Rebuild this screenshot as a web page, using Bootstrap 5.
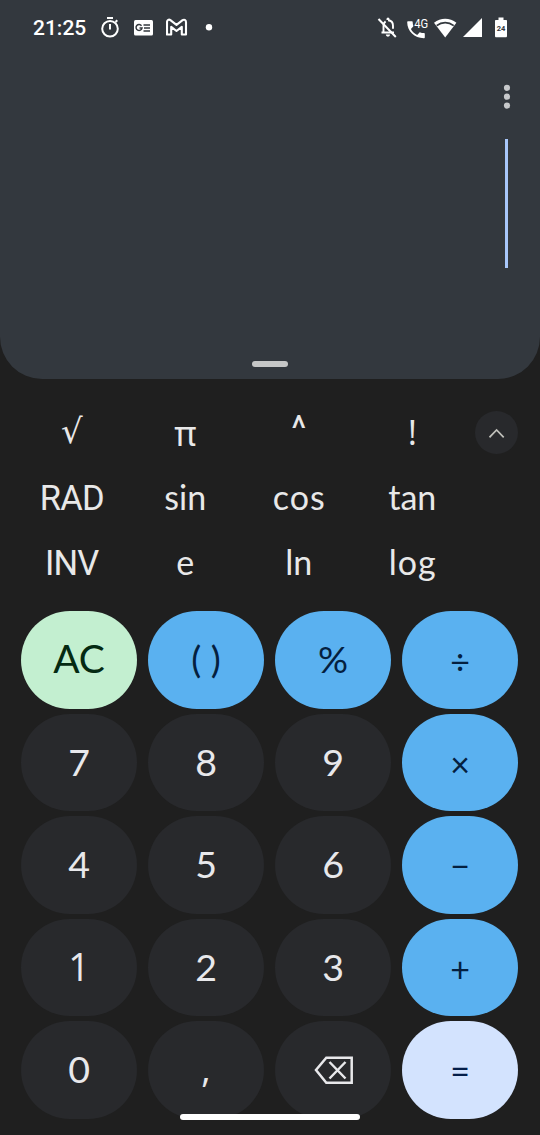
<!DOCTYPE html>
<html lang="en">
<head>
<meta charset="utf-8">
<meta name="viewport" content="width=device-width, initial-scale=1">
<title>Calculator</title>
<link rel="stylesheet" href="https://cdn.jsdelivr.net/npm/bootstrap@5.3.0/dist/css/bootstrap.min.css">
<style>
  body { background: #1f1f1f; color: #e8e8e8; font-family: Lato, "Liberation Sans", sans-serif; }
  .phone { width: 540px; height: 1135px; overflow: hidden; }
  svg { display: block; flex: none; }
  .display-panel { height: 379px; background: #33383e; border-radius: 0 0 42px 42px; }
  .status { height: 56px; padding: 0 31px 0 33px; color: #fff; }
  .clock { width: 67px; font: 500 21px/56px Roboto, sans-serif; }
  .ic-card { margin-left: 14px; }
  .ic-mail { margin-left: 12px; }
  .ic-dot { margin-left: 17px; }
  .ic-call { margin-left: 8px; }
  .ic-wifi { margin-left: 5px; }
  .ic-signal { margin-left: 6px; }
  .ic-battery { margin-left: 12px; }
  .menu-btn { width: 12px; height: 28px; margin: 27px 27px 0 0; }
  .cursor { width: 3px; height: 129px; margin: 28px 32px 0 0; background: #a8c7fa; }
  .handle { width: 36px; height: 6px; margin-bottom: 12px; background: #c6c7c7; }
  .functions { display: grid; grid-template-columns: repeat(4, 113.5px); grid-template-rows: repeat(3, 65px); padding: 20px 0 1px 15px; }
  .fn { font-size: 34px; line-height: 65px; padding: 0; border: 0; color: inherit; font-family: inherit; }
  .fn-caps { font-family: Roboto, sans-serif; font-size: 34.5px; letter-spacing: -.8px; padding-top: 2px; }
  .fn-wide { letter-spacing: 1px; padding-left: 1px; }
  .fn-sans { font-family: "Noto Sans", sans-serif; padding-top: 2px; }
  .fn-root { font-family: "DejaVu Sans", sans-serif; font-size: 34px; }
  .fn-caret { font-family: Roboto, sans-serif; font-size: 36px; line-height: 60px; padding-bottom: 5px; }
  .fn-bang { font-family: "Open Sans", sans-serif; font-size: 35px; }
  .toggle { width: 43px; height: 43px; margin: 32px 0 0 6px; background: #28292c; }
  .keypad { display: grid; grid-template-columns: repeat(4, 116px); grid-auto-rows: 97.5px; gap: 5px 11px; padding: 16px 0 0 21px; }
  .key { --bs-btn-padding-x: 0; --bs-btn-padding-y: 0; --bs-btn-color: #e8e8eb; --bs-btn-bg: #28292c; --bs-btn-border-width: 0;
    --bs-btn-font-family: Lato, sans-serif; --bs-btn-font-size: 37.5px; --bs-btn-line-height: 95px; padding-bottom: 2px; }
  .key-op { --bs-btn-bg: #5ab1f0; --bs-btn-color: #04203f; }
  .key-clear { --bs-btn-bg: #c3efd0; --bs-btn-color: #042a12; --bs-btn-font-size: 39px; padding-bottom: 3px; --bs-btn-line-height: 94px; }
  .key-equals { --bs-btn-bg: #d3e3fe; --bs-btn-color: #041e49; }
  .key-sign { --bs-btn-font-size: 34px; --bs-btn-line-height: 94px; padding: 3px 0 0; }
  .key-one { --bs-btn-font-family: "Open Sans", sans-serif; }
  .key-comma { --bs-btn-font-family: "Open Sans", sans-serif; --bs-btn-font-size: 36px; }
  .home-bar { left: 180px; bottom: 15px; width: 180px; height: 6px; background: #fff; }
</style>
</head>
<body>
<main class="phone position-relative">
  <section class="display-panel d-flex flex-column">
    <header class="status d-flex align-items-center justify-content-between">
      <div class="d-flex align-items-center">
        <span class="clock">21:25</span>
        <svg width="20" height="28" viewBox="100 14 20 28" fill="none" stroke="#fff" stroke-width="2"><circle cx="110" cy="28.7" r="7.8"/><path d="M107 18h6M110 24v5.5M115.5 22l1.8-1.8"/></svg>
        <svg class="ic-card" width="20" height="28" viewBox="134 14 20 28"><rect x="134" y="20" width="19" height="15.5" rx="1.500" fill="#fff"/><path d="M141.500 25.700a3 3 0 1 0 .5 2.400h-2.500M143.500 25.100h6.500M144 28h6M143.500 30.900h6.500" fill="none" stroke="#33383e" stroke-width="1.500"/></svg>
        <svg class="ic-mail" width="22" height="28" viewBox="166 14 22 28" fill="none" stroke="#fff" stroke-width="2.100" stroke-linejoin="round"><path d="M167 34.500V22.200c0-2.400 2-3.100 3.400-2l6.100 4.700 6.100-4.700c1.500-1.100 3.400-.3 3.400 2v12.300h-4.200v-7.600l-5.300 4.100-5.300-4.100v7.600z"/></svg>
        <svg class="ic-dot" width="8" height="28" viewBox="205 14 8 28"><circle cx="209" cy="27.300" r="3.200" fill="#fff"/></svg>
      </div>
      <div class="d-flex align-items-center">
        <svg width="22" height="28" viewBox="377 14 22 28"><path d="M381.500 32.500h12.500M383.500 32v-6.200c0-2 .8-3.500 2.100-4.400M388 20.300c3 .2 5 2.400 5 5.500v3" fill="none" stroke="#fff" stroke-width="1.900"/><path d="M386.500 20v-1a1.500 1.500 0 0 1 3 0v1zM385.800 34.500h4.300a2.150 2.150 0 0 1-4.300 0z" fill="#fff"/><path d="M378.500 19l17.300 18" stroke="#fff" stroke-width="2"/></svg>
        <svg class="ic-call" width="22" height="28" viewBox="407 14 22 28"><path d="M408.200 21.300h3.500c.6 0 1 .4 1 1 0 1.200.2 2.400.6 3.500.1.4 0 .8-.3 1l-2.100 2.200c1.500 2.900 3.400 4.400 6.300 5.900l2.100-2.200c.3-.3.700-.4 1-.3 1.100.4 2.300.6 3.500.6.6 0 1 .4 1 1v3.200c0 .6-.4 1-1 1C414.500 38.200 407.200 31.300 407.200 22.300c0-.6.4-1 1-1z" fill="#fff"/><text x="414.200" y="27.500" font-family="Roboto" font-size="13" textLength="14" lengthAdjust="spacingAndGlyphs" fill="#fff">4G</text></svg>
        <svg class="ic-wifi" width="23" height="28" viewBox="434 14 23 28"><path d="M445.200 37.500L434 22.800c6.600-5.300 15.800-5.300 22.400 0z" fill="#fff"/><path d="M436.700 25.600c5.100-4 11.900-4 17 0" fill="none" stroke="#33383e" stroke-width="1.800"/></svg>
        <svg class="ic-signal" width="20" height="28" viewBox="463 14 20 28"><path d="M463 37l19-19v19z" fill="#fff"/></svg>
        <svg class="ic-battery" width="14" height="28" viewBox="495 14 14 28"><path d="M498.500 17.500h5V20h2.500c.6 0 1 .4 1 1v15c0 .8-.5 1.300-1.300 1.300h-9.400c-.8 0-1.300-.5-1.300-1.300V21c0-.6.4-1 1-1h2.500z" fill="#fff"/><text x="501" y="31" text-anchor="middle" font-family="Roboto" font-weight="700" font-size="7.500" fill="#33383e">24</text></svg>
      </div>
    </header>
    <svg class="menu-btn align-self-end" viewBox="0 0 12 28" fill="#c7c9cb"><circle cx="6" cy="4.800" r="3.100"/><circle cx="6" cy="13.700" r="3.100"/><circle cx="6" cy="22.600" r="3.100"/></svg>
    <div class="cursor align-self-end"></div>
    <div class="handle rounded-pill mt-auto mx-auto"></div>
  </section>

  <section class="d-flex align-items-start">
    <div class="functions">
      <button class="btn fn fn-root">√</button><button class="btn fn fn-sans">π</button><button class="btn fn fn-caret">^</button><button class="btn fn fn-bang">!</button>
      <button class="btn fn fn-caps">RAD</button><button class="btn fn">sin</button><button class="btn fn fn-wide">cos</button><button class="btn fn">tan</button>
      <button class="btn fn fn-caps">INV</button><button class="btn fn">e</button><button class="btn fn">ln</button><button class="btn fn fn-wide">log</button>
    </div>
    <div class="toggle rounded-circle d-flex align-items-center justify-content-center">
      <svg width="16" height="10" viewBox="0 0 16 10" fill="none" stroke="#c0c0bb" stroke-width="1.700"><path d="M.500 9.300L7.600 2l7.100 7.300"/></svg>
    </div>
  </section>

  <section class="keypad">
    <button class="btn key key-clear rounded-pill">AC</button>
    <button class="btn key key-op rounded-pill">( )</button>
    <button class="btn key key-op rounded-pill">%</button>
    <button class="btn key key-op key-sign rounded-pill">÷</button>
    <button class="btn key rounded-pill">7</button>
    <button class="btn key rounded-pill">8</button>
    <button class="btn key rounded-pill">9</button>
    <button class="btn key key-op key-sign rounded-pill">×</button>
    <button class="btn key rounded-pill">4</button>
    <button class="btn key rounded-pill">5</button>
    <button class="btn key rounded-pill">6</button>
    <button class="btn key key-op key-sign rounded-pill">−</button>
    <button class="btn key key-one rounded-pill">1</button>
    <button class="btn key rounded-pill">2</button>
    <button class="btn key rounded-pill">3</button>
    <button class="btn key key-op key-sign rounded-pill">+</button>
    <button class="btn key rounded-pill">0</button>
    <button class="btn key key-comma rounded-pill">,</button>
    <button class="btn key rounded-pill pb-0 d-flex align-items-center justify-content-center" aria-label="Delete">
      <svg width="40" height="28" viewBox="0 0 40 28" fill="none" stroke="#e8e8eb" stroke-width="2.500"><path d="M13.300 1.700H38.700v25H13.300L3 14zM16.500 6l16 16.500M32.500 6l-16 16.500"/></svg>
    </button>
    <button class="btn key key-op key-equals key-sign rounded-pill">=</button>
  </section>
  <div class="home-bar position-absolute rounded-pill"></div>
</main>
<script src="https://cdn.jsdelivr.net/npm/bootstrap@5.3.0/dist/js/bootstrap.bundle.min.js"></script>
</body>
</html>
